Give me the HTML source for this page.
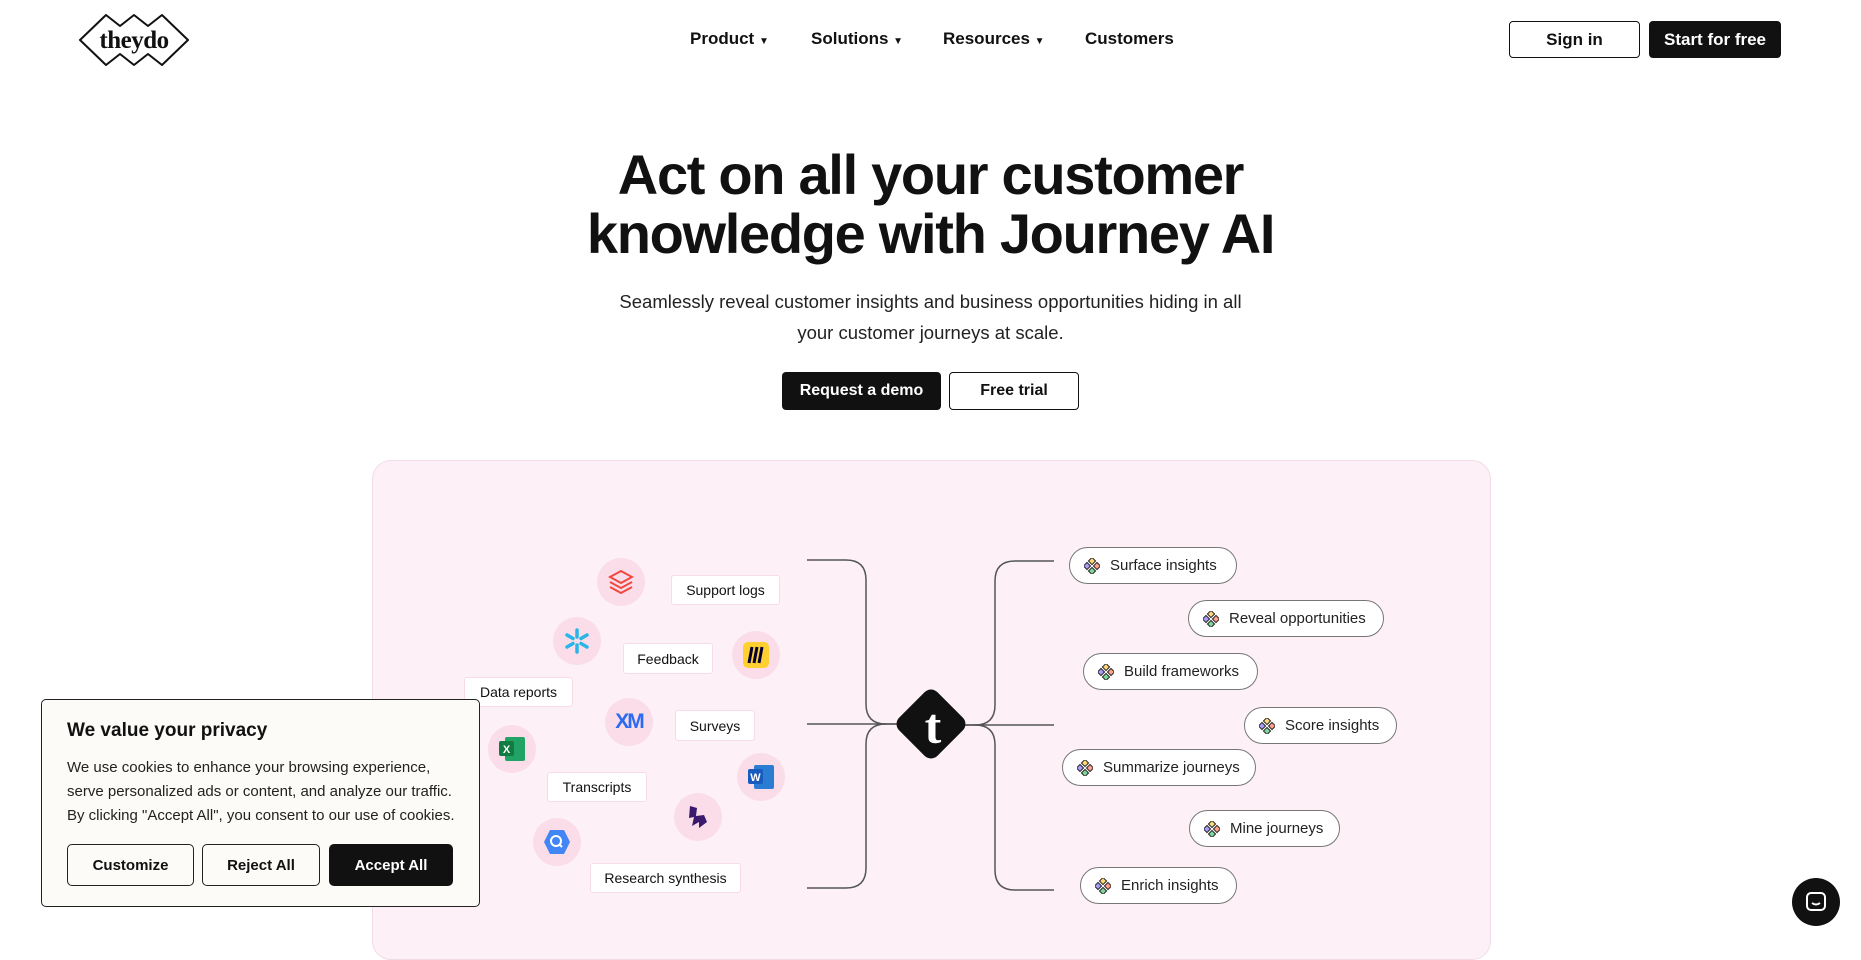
<!DOCTYPE html>
<html><head><meta charset="utf-8"><style>
*{margin:0;padding:0;box-sizing:border-box}
body{width:1861px;height:947px;overflow:hidden;background:#fff;font-family:"Liberation Sans",sans-serif;color:#111;position:relative}
.a{position:absolute}
.nav{font-size:17px;font-weight:700;top:29px}
.btn{position:absolute;display:flex;align-items:center;justify-content:center;font-weight:700;border-radius:4px}
.chip{position:absolute;background:#fff;border:1.5px solid #f7dbe8;border-radius:3px;font-size:14px;display:flex;align-items:center;justify-content:center;color:#111}
.circ{position:absolute;width:48px;height:48px;border-radius:50%;background:#fadde9;display:flex;align-items:center;justify-content:center}
.pill{position:absolute;height:37px;border:1.3px solid #777;border-radius:19px;background:#fff;font-size:15px;display:flex;align-items:center;padding-left:14px;color:#222}
.pill svg{margin-right:10px}
.cb{position:absolute;top:844px;height:42px;border:1.5px solid #222;border-radius:5px;display:flex;align-items:center;justify-content:center;font-weight:700;font-size:15px}
</style></head><body>
<svg class="a" style="left:78px;top:13px" width="112" height="55" viewBox="0 0 112 55">
<path d="M2 27 L28 2 L42 13 L56 2 L70 13 L84 2 L110 27 L84 52 L70 41 L56 52 L42 41 L28 52 Z" fill="none" stroke="#111" stroke-width="2" stroke-linejoin="round"/>
<text x="56" y="35" text-anchor="middle" font-family="Liberation Serif,serif" font-weight="700" font-size="25" fill="#111" letter-spacing="-0.5">theydo</text>
</svg>
<div class="a nav" style="left:690px">Product <span style="font-size:10px">▼</span></div>
<div class="a nav" style="left:811px">Solutions <span style="font-size:10px">▼</span></div>
<div class="a nav" style="left:943px">Resources <span style="font-size:10px">▼</span></div>
<div class="a nav" style="left:1085px">Customers</div>
<div class="btn" style="left:1509px;top:21px;width:131px;height:37px;border:1.5px solid #111;font-size:17px">Sign in</div>
<div class="btn" style="left:1649px;top:21px;width:132px;height:37px;background:#111;color:#fff;font-size:17px">Start for free</div>

<div class="a" style="left:0;width:1861px;top:145px;text-align:center;font-size:56px;font-weight:700;letter-spacing:-1.3px;line-height:59px">Act on all your customer<br>knowledge with Journey AI</div>
<div class="a" style="left:0;width:1861px;top:286px;text-align:center;font-size:18.5px;line-height:31px;color:#222">Seamlessly reveal customer insights and business opportunities hiding in all<br>your customer journeys at scale.</div>
<div class="btn" style="left:782px;top:372px;width:159px;height:38px;background:#111;color:#fff;font-size:16px">Request a demo</div>
<div class="btn" style="left:949px;top:372px;width:130px;height:38px;border:1.5px solid #111;font-size:16px">Free trial</div>

<div class="a" style="left:372px;top:460px;width:1119px;height:500px;background:#fdf1f7;border:1.5px solid #f1dbe8;border-radius:19px"></div>

<svg class="a" style="left:0;top:0" width="1861" height="947">
<g fill="none" stroke="#555" stroke-width="1.5">
<path d="M807 560 H846 Q866 560 866 580 V704 Q866 724 886 724 H900"/>
<path d="M807 888 H846 Q866 888 866 868 V744 Q866 724 886 724"/>
<path d="M807 724 H900"/>
<path d="M1054 561 H1015 Q995 561 995 581 V705 Q995 725 975 725 H962"/>
<path d="M1054 890 H1015 Q995 890 995 870 V745 Q995 725 975 725"/>
<path d="M1054 725 H962"/>
</g>
<rect x="904" y="697" width="54" height="54" rx="9" transform="rotate(45 931 724)" fill="#111"/>
<text x="933" y="743" text-anchor="middle" font-family="Liberation Serif,serif" font-weight="700" font-size="50" fill="#fff">t</text>
</svg>

<div class="chip" style="left:671px;top:575px;width:109px;height:30px">Support logs</div>
<div class="chip" style="left:623px;top:643px;width:90px;height:31px">Feedback</div>
<div class="chip" style="left:464px;top:677px;width:109px;height:30px">Data reports</div>
<div class="chip" style="left:675px;top:710px;width:80px;height:31px">Surveys</div>
<div class="chip" style="left:547px;top:772px;width:100px;height:30px">Transcripts</div>
<div class="chip" style="left:590px;top:863px;width:151px;height:30px">Research synthesis</div>

<div class="circ" style="left:597px;top:558px"><svg width="26" height="26" viewBox="0 0 26 26" fill="none" stroke="#f0483e" stroke-width="2"><path d="M2 8 L13 2 L24 8 L13 14 Z"/><path d="M2 13 L13 19 L24 13"/><path d="M2 18 L13 24 L24 18"/></svg></div>
<div class="circ" style="left:553px;top:617px"><svg width="26" height="26" viewBox="0 0 26 26" stroke="#29b5e8" stroke-width="3.5" stroke-linecap="round"><path d="M13 2 V9 M13 17 V24 M3 7 L9 10.5 M17 15.5 L23 19 M3 19 L9 15.5 M17 10.5 L23 7"/></svg></div>
<div class="circ" style="left:732px;top:631px"><svg width="26" height="26"><rect width="26" height="26" rx="5" fill="#ffd02f"/><path d="M6 21 L9 5 M11 21 L14 5 M16 21 L19 5" stroke="#050038" stroke-width="3"/></svg></div>
<div class="circ" style="left:605px;top:698px"><span style="font-weight:700;font-size:21px;color:#2a6bf2;letter-spacing:-2px">XM</span></div>
<div class="circ" style="left:488px;top:725px"><svg width="28" height="26"><rect x="7" y="1" width="20" height="24" rx="2" fill="#21a366"/><rect x="1" y="5" width="15" height="15" rx="2" fill="#107c41"/><text x="8.5" y="17" text-anchor="middle" font-size="11" font-weight="700" fill="#fff" font-family="Liberation Sans">X</text></svg></div>
<div class="circ" style="left:737px;top:753px"><svg width="28" height="26"><rect x="7" y="1" width="20" height="24" rx="2" fill="#2b7cd3"/><rect x="1" y="5" width="15" height="15" rx="2" fill="#185abd"/><text x="8.5" y="17" text-anchor="middle" font-size="11" font-weight="700" fill="#fff" font-family="Liberation Sans">W</text></svg></div>
<div class="circ" style="left:674px;top:793px"><svg width="22" height="26"><path d="M3 2 L10 4 L9 12 L17 11 L20 18 L12 24 L12 18 L5 22 L7 13 L2 14 Z" fill="#3b1a6d"/></svg></div>
<div class="circ" style="left:533px;top:818px"><svg width="28" height="26"><path d="M7 1 H21 L27 13 L21 25 H7 L1 13 Z" fill="#4285f4"/><circle cx="13" cy="12" r="5" fill="none" stroke="#fff" stroke-width="2"/><path d="M16 15 L19 18" stroke="#fff" stroke-width="2"/></svg></div>

<svg width="0" height="0" style="position:absolute"><defs><g id="ic"><rect x="5.5" y="0.5" width="5" height="5" transform="rotate(45 8 3)" fill="#ffd87a" stroke="#222" stroke-width="1"/><rect x="0.5" y="5.5" width="5" height="5" transform="rotate(45 3 8)" fill="#a99cf6" stroke="#222" stroke-width="1"/><rect x="10.5" y="5.5" width="5" height="5" transform="rotate(45 13 8)" fill="#ff9f8a" stroke="#222" stroke-width="1"/><rect x="5.5" y="10.5" width="5" height="5" transform="rotate(45 8 13)" fill="#7fd69a" stroke="#222" stroke-width="1"/></g></defs></svg>
<div class="pill" style="left:1069px;top:547px;width:168px"><svg width="16" height="16"><use href="#ic"/></svg>Surface insights</div>
<div class="pill" style="left:1188px;top:600px;width:196px"><svg width="16" height="16"><use href="#ic"/></svg>Reveal opportunities</div>
<div class="pill" style="left:1083px;top:653px;width:175px"><svg width="16" height="16"><use href="#ic"/></svg>Build frameworks</div>
<div class="pill" style="left:1244px;top:707px;width:153px"><svg width="16" height="16"><use href="#ic"/></svg>Score insights</div>
<div class="pill" style="left:1062px;top:749px;width:194px"><svg width="16" height="16"><use href="#ic"/></svg>Summarize journeys</div>
<div class="pill" style="left:1189px;top:810px;width:151px"><svg width="16" height="16"><use href="#ic"/></svg>Mine journeys</div>
<div class="pill" style="left:1080px;top:867px;width:157px"><svg width="16" height="16"><use href="#ic"/></svg>Enrich insights</div>

<div class="a" style="left:41px;top:699px;width:439px;height:208px;background:#fcfbf8;border:1.5px solid #222;border-radius:5px"></div>
<div class="a" style="left:67px;top:720px;font-size:19px;font-weight:700">We value your privacy</div>
<div class="a" style="left:67px;top:756px;font-size:15px;line-height:24px;color:#222">We use cookies to enhance your browsing experience,<br>serve personalized ads or content, and analyze our traffic.<br>By clicking "Accept All", you consent to our use of cookies.</div>
<div class="cb" style="left:67px;width:127px">Customize</div>
<div class="cb" style="left:202px;width:118px">Reject All</div>
<div class="cb" style="left:329px;width:124px;background:#111;color:#fff;border-color:#111">Accept All</div>

<div class="a" style="left:1792px;top:878px;width:48px;height:48px;border-radius:50%;background:#111;display:flex;align-items:center;justify-content:center"><svg width="22" height="22" viewBox="0 0 22 22" fill="none" stroke="#fff" stroke-width="2"><rect x="2" y="2" width="18" height="17" rx="4"/><path d="M7 12 Q11 15 15 12"/></svg></div>
</body></html>
